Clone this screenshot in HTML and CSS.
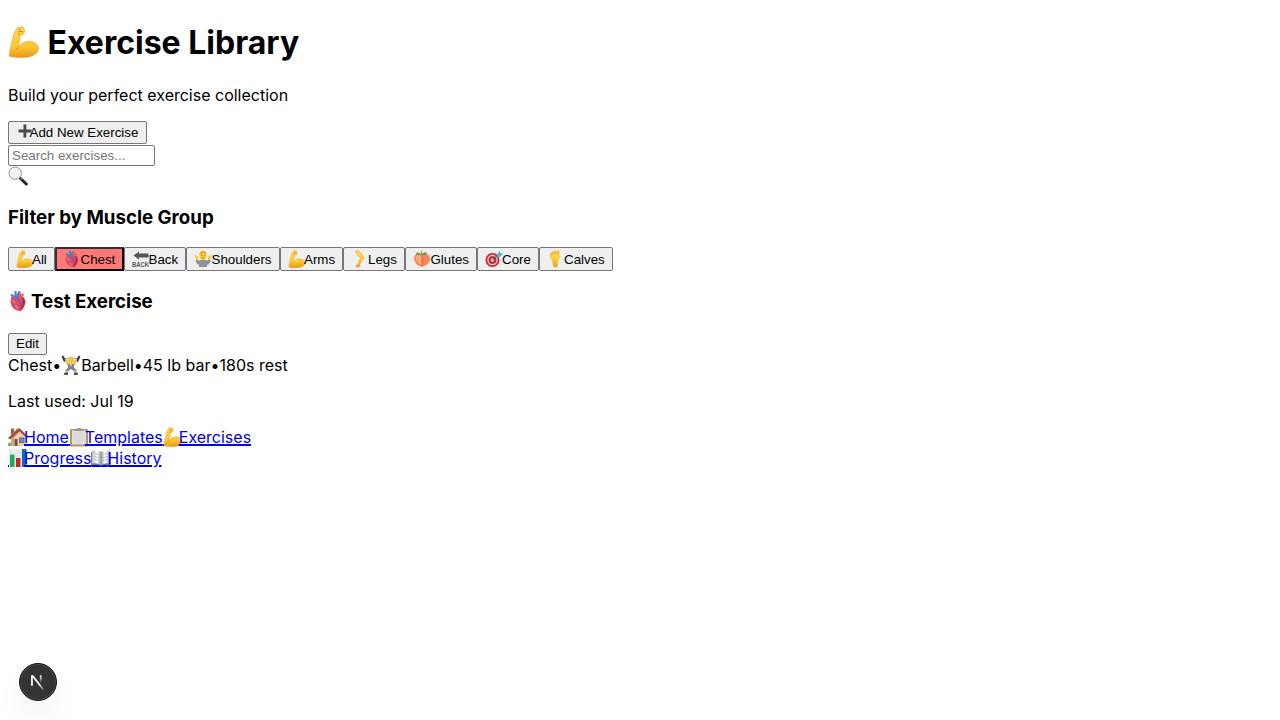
FILE: index.html
```html
<!DOCTYPE html>
<html lang="en">
<head>
<meta charset="utf-8">
<title>Exercise Library</title>
<link rel="stylesheet" href="styles.css">
</head>
<body>
<svg class="defs" aria-hidden="true">
  <defs>
    <linearGradient id="skin" x1="0" y1="0" x2="0" y2="1"><stop offset="0" stop-color="#ffd751"/><stop offset=".65" stop-color="#ffc72f"/><stop offset="1" stop-color="#e8981c"/></linearGradient>
    <linearGradient id="book" x1="0" y1="0" x2="1" y2="0"><stop offset="0" stop-color="#b9bdc0"/><stop offset=".3" stop-color="#fff"/><stop offset=".5" stop-color="#8e9294"/><stop offset=".7" stop-color="#fff"/><stop offset="1" stop-color="#b9bdc0"/></linearGradient>
    <linearGradient id="fadeDiag" x1="109" y1="116.5" x2="144.5" y2="160.5" gradientUnits="userSpaceOnUse"><stop stop-color="#fff"/><stop offset="1" stop-color="#fff" stop-opacity="0"/></linearGradient>
    <linearGradient id="fadeStem" x1="121" y1="54" x2="120.8" y2="106.9" gradientUnits="userSpaceOnUse"><stop stop-color="#fff"/><stop offset="1" stop-color="#fff" stop-opacity="0"/></linearGradient>
    <symbol id="arm" viewBox="0 0 32 32">
      <path fill="url(#skin)" stroke="#dc9b26" stroke-width=".6" d="M8.500 3C9.500 1 13 .5 15.500 1.500C17 3 16.800 7 15 8.500L12 9.500C12 14 10.500 17 10 21.500C13 17 17 15.300 21.500 15.500C27 16 31 19 30.500 23C30 28 23 31.500 15 31.500C9 31.500 5 31 1.500 30.500C1.300 27 2.500 23 3.500 18C4.500 12 6 7 8.500 3Z"/>
      <path fill="none" stroke="#b87312" stroke-width=".8" d="M10 6L13 5.500L15 6M10.500 3L13 4M10 21.500L8.500 23.500M12 8L10 8.500"/>
    </symbol>
    <symbol id="heart" viewBox="0 0 20 22">
      <path fill="#d94b6a" d="M3 7C5 5 8 6 10 5C14 5 18 8 17.500 13C16 18 14 21 12 21C7 21 3 17 2.500 12Z"/>
      <path fill="#a92c4c" d="M14 7C18 9 18 15 13 20L11 21C14 17 15 13 14 7Z"/>
      <path fill="#e85a60" d="M10 6L10 1.500L12 1L13 5L15 3L16 5L13 8Z"/>
      <path fill="none" stroke="#3f83cc" stroke-width="2" d="M7.500 1V6L10 9M3 4.500L6 7M12 2L9 5"/>
      <path fill="none" stroke="#5b5aa8" stroke-width="1" d="M9 8L12 12L12 16"/>
      <path fill="none" stroke="#f08a9c" stroke-width="1.100" d="M4.500 10L7 13M7 15.500L10 18.500"/>
    </symbol>
    <symbol id="plus" viewBox="0 0 14 14"><path fill="#4b4b4b" d="M5.500 .5H8.300V5.600H13.500V8.400H8.300V13.500H5.500V8.400H.5V5.600H5.500Z"/></symbol>
    <symbol id="search" viewBox="0 0 20 20">
      <path d="M12.500 12.500L18.300 18" stroke="#20262b" stroke-width="3" stroke-linecap="round"/><path d="M11 11L14 14" stroke="#526574" stroke-width="1.700"/>
      <circle cx="7.200" cy="7.200" r="6.200" fill="#f1f4f6" stroke="#8b949a" stroke-width="1"/><path d="M3.500 7Q4 4 7 3.500" fill="none" stroke="#fff" stroke-width="1.300"/>
    </symbol>
    <symbol id="back" viewBox="0 0 18 18">
      <path fill="#555" d="M1.500 5.500L7 1.500V3.500H16.500V7.500H7V9.500Z"/>
      <text x="0" y="16.500" font-family="Liberation Sans, sans-serif" font-weight="bold" font-size="8" textLength="17" lengthAdjust="spacingAndGlyphs" fill="#555">BACK</text>
    </symbol>
    <symbol id="shrug" viewBox="0 0 18 16">
      <path fill="#8d9398" d="M5 9.500Q9 8 13 9.500L15.500 8L17 10L14 14L13 13V16H5V13L4 14L1.500 10L3 8Z"/>
      <path fill="#ffc832" d="M5.500 2.500Q6 0 9 0Q12 0 12.500 2.500V6Q11.500 9 9 9Q6.500 9 5.500 6ZM0 3.500L4 5.500L4 8.500L2 8ZM18 3.500L14 5.500L14 8.500L16 8Z"/>
      <path fill="#e5a61f" d="M5.500 3Q6 0 9 0Q12 0 12.500 3L10 2Z"/><path fill="#a87520" d="M7.500 6.500H10.500V7.300H7.500ZM6.800 4H8V4.800H6.800ZM10 4H11.200V4.800H10Z"/>
    </symbol>
    <symbol id="leg" viewBox="0 0 12 18"><path fill="url(#skin)" stroke="#e09d27" stroke-width=".4" d="M1.500 1L4 .5Q8 3 10 7.500Q10 9 8.500 10.500L5.500 14.500L6.500 16Q5 17.500 2 17L2 16L4 14Q5 10 6.500 8Q3 6 1.500 1Z"/></symbol>
    <symbol id="peach" viewBox="0 0 18 17">
      <path fill="#f98458" d="M9 4Q12 1.500 15 4Q18 6.500 16.500 11Q14 15 9 16.500Q3 15 1.500 10Q0 4 5 3Z"/><path fill="#ffab79" d="M2.500 6.500Q5 3.500 8 6L8.500 14.500Q3 12.500 2.500 6.500Z"/>
      <path fill="none" stroke="#e0674f" d="M9 4.500Q11 9 9 15"/><path fill="#5a9b38" d="M8.500 4.500Q4 5 2.500 2.500Q6 1 8.500 4.500Q10 1 14 2Q13 5 8.500 4.500Z"/><path stroke="#76552b" stroke-width=".8" d="M8.500 4V.5"/>
    </symbol>
    <symbol id="target" viewBox="0 0 18 17">
      <circle cx="7.500" cy="9.500" r="7" fill="#ca2737"/><circle cx="7.500" cy="9.500" r="5.200" fill="#f3dedf"/><circle cx="7.500" cy="9.500" r="4" fill="#cf2637"/><circle cx="7.500" cy="9.500" r="1.700" fill="#fff"/>
      <path d="M7.500 9.500L15 3" stroke="#376f88" stroke-width="1.400"/><path fill="#55b5cf" d="M12 4L14.500 .5L15.500 2.500L18 3.200L15 6.500H12Z"/>
    </symbol>
    <symbol id="foot" viewBox="0 0 12 18">
      <path fill="url(#skin)" stroke="#dc981c" stroke-width=".4" d="M1.500 5.500Q3 3 6.500 3Q10.500 3 10.300 6.500Q10 9 8.500 11Q9.500 17.300 6.500 17.300Q3.500 17 4 13Q4 10 1.500 8Z"/>
      <g fill="#ffc52f" stroke="#dc981c" stroke-width=".3"><ellipse cx="8.800" cy="2.500" rx="1.500" ry="2"/><circle cx="6.400" cy="2" r="1.100"/><circle cx="4.500" cy="2.400" r="1"/><circle cx="3" cy="3.400" r=".9"/><circle cx="1.900" cy="4.800" r=".8"/></g>
      <path d="M4.500 8.500Q6.500 10.500 5.700 14" stroke="#e2a029" fill="none" stroke-width=".7"/>
    </symbol>
    <symbol id="lifter" viewBox="0 0 20 20">
      <path d="M2 3.500H18" stroke="#8b8d90" stroke-width=".8"/><path fill="#343b3e" d="M.5 1.500L2.500 .5L5 6L3 7ZM19.500 1.500L17.500 .5L15 6L17 7Z"/>
      <path fill="#f2c24c" d="M4 5L6 4L8 8H12L14 4L16 5L14 10L12 12H8L6 10ZM7.200 4Q7.200 1.500 10 1.500Q12.800 1.500 12.800 4V6Q12 8 10 8Q8 8 7.200 6Z"/>
      <path fill="#6d86a3" d="M7 9L8.500 9L9 11H11L11.500 9L13 9L13 13L16 15L14 17L10 14L6 17L4 15L7 13Z"/><path stroke="#e9b73e" stroke-width="2" d="M5 15L6 18M15 15L14 18"/><path fill="#394f70" d="M3.500 17.500H7V20H3ZM13 17.500H16.500L17 20H13Z"/>
    </symbol>
    <symbol id="house" viewBox="0 0 20 20">
      <path fill="#8aa65c" d="M0 17Q2 13 4 18L4 19H0Z"/><path fill="#e8d2ae" d="M3 9L10 3L18 9V19H3Z"/><path fill="#caa88a" d="M3 9L9 3L10 6L6 11V19H3Z"/>
      <path fill="#a85a47" d="M3 1.500H6V5L3 8Z"/><path fill="#a8503e" d="M0 11L9.500 1.500L12 1.500L20 9.500L18.500 11L11.500 4.500L2 12.500Z"/><path fill="#884a35" d="M6.500 12H9.500V19H6.500Z"/><path fill="#579bc5" stroke="#775140" stroke-width=".8" d="M11.500 11H16V15.500H11.500Z"/>
    </symbol>
    <symbol id="clipboard" viewBox="0 0 20 20"><rect x="1" y="2" width="18" height="17.500" rx="1" fill="#b5946a"/><path fill="#dfe0e1" d="M3 3.500H17V17.500H3Z"/><path fill="#8d8e8d" d="M6 1.800H8Q10 0 12 1.800H14V3.700H6Z"/><path stroke="#ccced0" stroke-width=".6" d="M5 6H15M5 8H15M5 10H15M5 12H15M5 14H15"/></symbol>
    <symbol id="chart" viewBox="0 0 20 20"><path fill="#e6edf2" d="M1 1H19V19H1Z"/><path stroke="#d3dde4" stroke-width=".5" d="M1 5H19M1 9H19M1 13H19"/><path fill="#1fae4b" d="M2 6.500H6.500V19H2Z"/><path fill="#c62530" d="M8 10H12.500V19H8Z"/><path fill="#1768b4" d="M14 1H18.500V19H14Z"/></symbol>
    <symbol id="openbook" viewBox="0 0 20 20"><path fill="#6c8292" d="M0 4H20V17H12L10 18L8 17H0Z"/><path fill="url(#book)" d="M1 2.500Q6 1.500 10 4Q14 1.500 19 2.500V15.500Q14 14.500 10 17Q6 14.500 1 15.500Z"/><path stroke="#a2a7ab" stroke-width=".6" fill="none" d="M10 4V17M3 5.500L8 6.500M3 8.500L8 9.500M3 11.500L8 12.500M12 6.500L17 5.500M12 9.500L17 8.500M12 12.500L17 11.500"/></symbol>
  </defs>
</svg>
<main>
  <h1 class="title"><svg class="title-icon"><use href="#arm"/></svg>Exercise Library</h1>
  <p class="subtitle">Build your perfect exercise collection</p>
  <button class="btn add"><svg><use href="#plus"/></svg><span class="label">Add New Exercise</span></button>
  <input class="search" type="text" placeholder="Search exercises...">
  <svg class="search-icon"><use href="#search"/></svg>
  <h3 class="filter-title">Filter by Muscle Group</h3>
  <div class="filters">
    <button class="btn all"><svg><use href="#arm"/></svg><span class="label">All</span></button>
    <button class="btn chest"><svg><use href="#heart"/></svg><span class="label">Chest</span></button>
    <button class="btn back"><svg><use href="#back"/></svg><span class="label">Back</span></button>
    <button class="btn shoulders"><svg><use href="#shrug"/></svg><span class="label">Shoulders</span></button>
    <button class="btn arms"><svg><use href="#arm"/></svg><span class="label">Arms</span></button>
    <button class="btn legs"><svg><use href="#leg"/></svg><span class="label">Legs</span></button>
    <button class="btn glutes"><svg><use href="#peach"/></svg><span class="label">Glutes</span></button>
    <button class="btn core"><svg><use href="#target"/></svg><span class="label">Core</span></button>
    <button class="btn calves"><svg><use href="#foot"/></svg><span class="label">Calves</span></button>
  </div>
  <h3 class="exercise-title"><svg><use href="#heart"/></svg>Test Exercise</h3>
  <button class="btn edit">Edit</button>
  <div class="details"><span>Chest</span><span>•</span><svg><use href="#lifter"/></svg><span>Barbell</span><span>•</span><span>45 lb bar</span><span>•</span><span>180s rest</span></div>
  <p class="last-used">Last used: Jul 19</p>
  <nav class="links">
    <div><a href="#"><svg><use href="#house"/></svg><span class="gap">&nbsp;</span><span class="label">Home</span></a><a href="#"><svg><use href="#clipboard"/></svg><span class="gap">&nbsp;</span><span class="label">Templates</span></a><a href="#"><svg><use href="#arm"/></svg><span class="gap">&nbsp;</span><span class="label">Exercises</span></a></div>
    <div><a href="#"><svg><use href="#chart"/></svg><span class="gap">&nbsp;</span><span class="label">Progress</span></a><a href="#"><svg><use href="#openbook"/></svg><span class="gap">&nbsp;</span><span class="label">History</span></a></div>
  </nav>
</main>
<div class="dev-badge"><svg viewBox="12 10 180 180" fill="none"><path fill="url(#fadeDiag)" d="M149.500 157.500L69.100 54H54V126H66.100V69.400L140 164.800Z"/><path fill="url(#fadeStem)" d="M115 54H127V126H115Z"/></svg></div>
</body>
</html>
```

FILE: styles.css
```css
* { box-sizing: border-box; }
body { margin: 0; background: #fff; color: #000; font: 16px/20px Inter, sans-serif; overflow: hidden; }
main { display: flex; flex-direction: column; align-items: flex-start; padding: 22px 8px 0; }
svg { flex: none; display: block; }
.defs { position: absolute; width: 0; height: 0; }
h1, h3, p { margin: 0; }
.label { position: relative; z-index: 1; }
.title { display: flex; align-items: center; height: 40px; font-size: 32px; line-height: 40px; font-weight: 700; padding-top: 2px; }
.title-icon { width: 32px; height: 32px; margin: -2px 7.5px 0 0; }
.subtitle { margin-top: 23px; height: 20px; }
.btn {
  position: relative; height: 23px; padding: 0; margin: 0; text-align: left; white-space: nowrap;
  background: #efefef; color: #000; border: 1px solid #767676; border-radius: 2px;
  font: 13.3333px/21px "Liberation Sans", Arial, sans-serif;
}
.btn svg { position: absolute; top: 2px; left: 7px; width: 18px; height: 18px; }
.add { width: 138.5px; margin-top: 16px; padding-left: 20.5px; }
.btn.add svg { left: 9px; width: 14px; height: 14px; }
.search { width: 147px; height: 21px; margin: 1px 0 0; padding: 1px 3px; border: 1px solid #767676; border-radius: 2px; font: 13.3333px "Liberation Sans", Arial, sans-serif; }
.search::placeholder { color: #757575; }
.search-icon { width: 20px; height: 20px; }
.filter-title { margin-top: 22px; font-size: 18.72px; line-height: 20px; }
.filters { display: flex; margin-top: 19px; height: 24px; }
.filters .btn { height: 23.5px; padding-top: 1px; line-height: 22px; }
.all { width: 47px; padding-left: 23px; }
.chest { width: 69px; padding-left: 23.5px; }
.filters .chest { padding-top: 0; line-height: 21px; background: #ff7979; border: 2px solid; border-color: #333 #000 #000 #333; border-radius: 0; }
.btn.chest svg { left: 6px; top: 1px; }
.back { width: 62px; padding-left: 23.5px; }
.shoulders { width: 94px; padding-left: 24.5px; }
.arms { width: 63px; padding-left: 23px; }
.legs { width: 62px; padding-left: 24px; }
.glutes { width: 72px; padding-left: 24.5px; }
.core { width: 62px; padding-left: 24px; }
.calves { width: 74px; padding-left: 24px; }
.btn.calves svg { left: 6px; }
.exercise-title { display: flex; align-items: center; height: 22px; margin-top: 19px; padding-top: 2px; font-size: 18.72px; line-height: 22px; }
.exercise-title svg { width: 20px; height: 22px; margin: -2px 3px 0 0; }
.edit { width: 39px; height: 22px; margin-top: 21px; padding-left: 7px; line-height: 20px; }
.details { display: flex; align-items: center; height: 20px; }
.details svg { width: 20px; height: 20px; }
.last-used { margin-top: 16px; height: 20px; }
.links { margin-top: 16px; line-height: 21px; }
.links div { height: 21px; }
.links a { position: relative; color: #0000ee; text-decoration-thickness: 1.5px; }
.links svg { position: absolute; left: 0; top: 0; width: 20px; height: 20px; }
.gap { word-spacing: 11.5px; }
.dev-badge {
  position: fixed; left: 19px; top: 663px; width: 38px; height: 38px; border-radius: 50%;
  display: flex; align-items: center; justify-content: center; background: #333;
  border: 1px solid #171717; box-shadow: inset 0 0 0 1px #4b4b4b, 0 16px 32px -8px rgba(0,0,0,.14);
}
.dev-badge svg { width: 26px; height: 26px; }
```
